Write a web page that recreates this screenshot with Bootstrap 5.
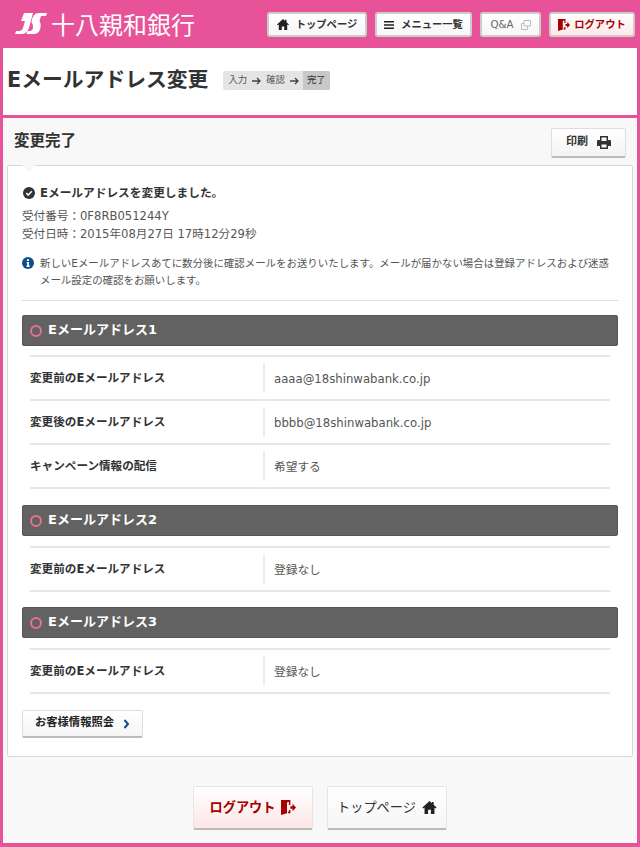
<!DOCTYPE html>
<html lang="ja">
<head>
<meta charset="UTF-8">
<meta name="viewport" content="width=device-width, initial-scale=1.0">
<title>Eメールアドレス変更</title>
<link rel="stylesheet" href="https://cdn.jsdelivr.net/npm/bootstrap@5.3.0/dist/css/bootstrap.min.css">
<style>
body {
    background: #e85298;
    font-family: "DejaVu Sans", "Noto Sans CJK JP", sans-serif;
    font-size: 11.6px;
    color: #555;
    width: 640px;
    height: 847px;
    overflow: hidden;
}
.site-head { height: 48px; padding: 12px 5px 0 15px; }
.logo-mark { margin-top: 1px; }
.brand-name { font: 400 24px/24px "Noto Sans CJK JP", sans-serif; color: #fff; margin-left: 4px; }
.head-btn {
    height: 25px; background: linear-gradient(#fff, #f6f6f6);
    border: 2px solid #ccc; border-radius: 3px; font-size: 10.3px; font-weight: 700; color: #333;
    gap: 7px; white-space: nowrap;
}
.btn-top { width: 100px; }
.btn-menu { width: 97px; }
.btn-qa { width: 61px; font-weight: 400; color: #666; }
.btn-out { width: 86px; color: #a40000; background: linear-gradient(#fff, #fde8e8); gap: 4px; }
.title-panel { height: 67px; margin: 0 3px; background: #fff; padding-left: 4px; }
.title-panel h1 { font-size: 20.8px; font-weight: 700; color: #333; margin: 0 0 2px; }
.steps { margin-left: 15px; height: 19px; background: #e4e4e4; border-radius: 2px; font-size: 9.4px; color: #555; padding-left: 5px; margin-top: -2px; }
.steps svg { margin: 0 5px; }
.steps .now { background: #c8c8c8; color: #333; height: 100%; display: flex; align-items: center; padding: 0 4px; border-radius: 0 2px 2px 0; margin-left: -1px; }
.main-panel { margin: 3px 3px 4px; height: 725px; background: #f8f8f8; padding: 0 4px; }
.sec-top { height: 47px; padding: 10px 7px 0 7px; }
.sec-top h2 { font-size: 15.5px; font-weight: 700; color: #333; margin: 4px 0 0; }
.print-btn { width: 75px; height: 30px; background: linear-gradient(#fff, #f4f4f4); border: 1px solid #ddd; border-bottom: 2px solid #bbb; border-radius: 2px; font-size: 11px; font-weight: 700; color: #333; gap: 9px; }
.white-card { position: relative; background: #fff; border: 1px solid #d8d8d8; border-radius: 2px; height: 592px; padding: 19px 14px 0; }
.white-card::before { content: ""; position: absolute; left: 14px; top: -1px; border: 7px solid transparent; border-top-color: #f8f8f8; border-bottom: 0; }
.done-line { font-size: 11.7px; font-weight: 700; color: #333; line-height: 16px; gap: 5px; margin-left: 1px; }
.rec-lines { line-height: 18px; margin-top: 6px; }
.note-line { margin-top: 12px; line-height: 16.5px; gap: 6px; font-size: 10.45px; padding-bottom: 12px; border-bottom: 1px solid #ddd; }
.note-line svg { flex: none; margin-top: 2px; }
.band { background: #626262; border: 1px solid #555; border-radius: 2px; height: 31px; color: #fff; font-size: 13px; font-weight: 700; padding: 0 0 2px 7px; gap: 6px; margin-top: 14px; }
.band-dot { width: 12px; height: 12px; border: 2px solid #e9708f; border-radius: 50%; margin-top: 2px; }
.info-rows { margin: 9px 8px 16px; border-top: 2px solid #e6e6e6; }
.info-rows.mid { margin: 10px 8px 15px; }
.info-row { height: 44px; border-bottom: 2px solid #e6e6e6; }
.info-key { width: 233px; font-weight: 700; color: #333; font-size: 11.6px; padding-top: 2px; }
.info-val { border-left: 2px solid #eee; height: 30px; padding: 3px 0 0 9px; font-size: 11.7px; }
.band.next { margin-top: 0; }
.inquiry-btn { width: 121px; height: 28px; margin-top: 16px; background: linear-gradient(#fff, #f5f5f5); border: 1px solid #ddd; border-bottom: 2px solid #bbb; border-radius: 2px; font-size: 11.3px; font-weight: 700; color: #222; gap: 9px; }
.foot-btns { margin-top: 29px; gap: 14px; }
.foot-btn { width: 120px; height: 44px; border: 1px solid #e6e6e6; border-bottom: 2px solid #bbb; border-radius: 2px; font-size: 13.2px; gap: 6px; background: linear-gradient(#fff, #f5f5f5); color: #333; }
.foot-btn.out { background: linear-gradient(#fff, #fde6e6); color: #a40000; font-weight: 700; }
</style>
</head>
<body>

<header class="site-head d-flex justify-content-between">
    <div class="d-flex align-items-start">
        <svg width="32" height="21" viewBox="0 0 32 21" class="logo-mark"><path fill="#fff" d="M9 0h9l-3.500 13Q12.500 21 7 21H0l1-3h3q3 0 4-3l2-7H6zM23 0h9l-1 3h-5l-1.500 5q2 3 1 7-1.500 6-7 6h-7l1-3h2q3 0 3.500-3 .5-3-1.500-6 1-9 7.500-9z"/></svg>
        <span class="brand-name">十八親和銀行</span>
    </div>
    <nav class="d-flex gap-2">
        <a class="head-btn btn-top d-flex align-items-center justify-content-center text-decoration-none">
            <svg width="12" height="11" viewBox="0 0 12 11"><path fill="#222" d="M6 0 0 5.500l.8.8L1.800 5.400V11h3V7.500h2.400V11h3V5.400l1 .9.8-.8L9.500 3.200V.8H8v1z"/></svg>
            トップページ
        </a>
        <a class="head-btn btn-menu d-flex align-items-center justify-content-center text-decoration-none">
            <svg width="10" height="10" viewBox="0 0 10 10"><path fill="#222" d="M0 1h10v1.400H0zM0 4.300h10v1.400H0zM0 7.600h10V9H0z"/></svg>
            メニュー一覧
        </a>
        <a class="head-btn btn-qa d-flex align-items-center justify-content-center text-decoration-none">
            Q&amp;A
            <svg width="10" height="10" viewBox="0 0 10 10"><path fill="none" stroke="#bbb" d="M3 .5h6.500v5.500H3zM.5 3.500H3M.5 3.500v6h6V6"/></svg>
        </a>
        <a class="head-btn btn-out d-flex align-items-center justify-content-center text-decoration-none">
            <svg width="12" height="12" viewBox="0 0 12 12"><path fill="#a40000" d="M0 0h7.500v4H6.300V1.300L4.800 2v8.500l-4.800 1.500zM6.300 8h1.200v2.500H5.500V9.300h.8zM7.500 5h1.700V3L12 6 9.200 9V7H7.500z"/></svg>
            ログアウト
        </a>
    </nav>
</header>

<section class="title-panel d-flex align-items-center">
    <h1>Eメールアドレス変更</h1>
    <div class="steps d-flex align-items-center">
        入力
        <svg width="9" height="8" viewBox="0 0 9 8"><path fill="none" stroke="#444" stroke-width="1.300" d="M0 4h8M5 1l3 3-3 3"/></svg>
        確認
        <svg width="9" height="8" viewBox="0 0 9 8"><path fill="none" stroke="#444" stroke-width="1.300" d="M0 4h8M5 1l3 3-3 3"/></svg>
        <span class="now">完了</span>
    </div>
</section>

<main class="main-panel">
    <div class="sec-top d-flex justify-content-between align-items-start">
        <h2>変更完了</h2>
        <button type="button" class="print-btn d-flex align-items-center justify-content-center">
            印刷
            <svg width="14" height="13" viewBox="0 0 14 13"><path fill="#333" fill-rule="evenodd" d="M3 0h8v4h2a1 1 0 0 1 1 1v5h-3v3H3v-3H0V5a1 1 0 0 1 1-1h2zM4.500 1.500V5h5V1.500zM4.500 8.500v3h5v-3z"/></svg>
        </button>
    </div>

    <div class="white-card">
        <div class="done-line d-flex align-items-center">
            <svg width="12" height="12" viewBox="0 0 12 12"><circle cx="6" cy="6" r="6" fill="#333"/><path fill="none" stroke="#fff" stroke-width="1.600" d="M3.200 6l2 2 3.600-3.800"/></svg>
            Eメールアドレスを変更しました。
        </div>
        <div class="rec-lines">
            受付番号：0F8RB051244Y<br>
            受付日時：2015年08月27日 17時12分29秒
        </div>
        <div class="note-line d-flex">
            <svg width="12" height="12" viewBox="0 0 12 12"><circle cx="6" cy="6" r="6" fill="#0f4c8a"/><path fill="#fff" d="M5 2.300h2v1.600H5zM4.600 5h2.400v3.600h.6V10H4.500V8.600h.8V6.300h-.7z"/></svg>
            <span>新しいEメールアドレスあてに数分後に確認メールをお送りいたします。メールが届かない場合は登録アドレスおよび迷惑メール設定の確認をお願いします。</span>
        </div>

        <div class="band d-flex align-items-center"><span class="band-dot"></span>Eメールアドレス1</div>
        <div class="info-rows">
            <div class="info-row d-flex align-items-center"><div class="info-key">変更前のEメールアドレス</div><div class="info-val d-flex align-items-center">aaaa@18shinwabank.co.jp</div></div>
            <div class="info-row d-flex align-items-center"><div class="info-key">変更後のEメールアドレス</div><div class="info-val d-flex align-items-center">bbbb@18shinwabank.co.jp</div></div>
            <div class="info-row d-flex align-items-center"><div class="info-key">キャンペーン情報の配信</div><div class="info-val d-flex align-items-center">希望する</div></div>
        </div>

        <div class="band next d-flex align-items-center"><span class="band-dot"></span>Eメールアドレス2</div>
        <div class="info-rows mid">
            <div class="info-row d-flex align-items-center"><div class="info-key">変更前のEメールアドレス</div><div class="info-val d-flex align-items-center">登録なし</div></div>
        </div>

        <div class="band next d-flex align-items-center"><span class="band-dot"></span>Eメールアドレス3</div>
        <div class="info-rows mid">
            <div class="info-row d-flex align-items-center"><div class="info-key">変更前のEメールアドレス</div><div class="info-val d-flex align-items-center">登録なし</div></div>
        </div>

        <button type="button" class="inquiry-btn d-flex align-items-center justify-content-center">
            お客様情報照会
            <svg width="7" height="10" viewBox="0 0 7 10"><path fill="none" stroke="#0f4c8a" stroke-width="2" d="M1.500 1l3.500 4-3.500 4"/></svg>
        </button>
    </div>

    <div class="foot-btns d-flex justify-content-center">
        <button type="button" class="foot-btn out d-flex align-items-center justify-content-center">
            ログアウト
            <svg width="15" height="15" viewBox="0 0 12 12"><path fill="#a40000" d="M0 0h7.500v4H6.300V1.300L4.800 2v8.500l-4.800 1.500zM6.300 8h1.200v2.500H5.500V9.300h.8zM7.500 5h1.700V3L12 6 9.200 9V7H7.500z"/></svg>
        </button>
        <button type="button" class="foot-btn d-flex align-items-center justify-content-center">
            トップページ
            <svg width="15" height="13" viewBox="0 0 12 11"><path fill="#222" d="M6 0 0 5.500l.8.8L1.800 5.400V11h3V7.500h2.400V11h3V5.400l1 .9.8-.8L9.500 3.200V.8H8v1z"/></svg>
        </button>
    </div>
</main>

<script src="https://cdn.jsdelivr.net/npm/bootstrap@5.3.0/dist/js/bootstrap.bundle.min.js"></script>
</body>
</html>
